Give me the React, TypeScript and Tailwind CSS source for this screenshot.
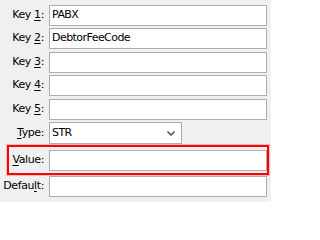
import React from 'react';

const font = { fontFamily: '"DejaVu Sans", Tahoma, sans-serif' };

interface FieldRowProps {
  label: React.ReactNode;
  value?: string;
  className?: string;
}

const TextBox: React.FC<{ value?: string }> = ({ value }) => (
  <div className="ml-[5px] flex h-[21px] w-[218px] items-center border border-[#adadad] bg-white pl-[2px] text-[11px] tracking-[-0.55px] text-black">
    {value}
  </div>
);

const Label: React.FC<{ children: React.ReactNode; className?: string }> = ({ children, className }) => (
  <div className={`text-right text-[11px] tracking-[-0.4px] text-black ${className ?? 'w-[44px]'}`}>{children}</div>
);

const FieldRow: React.FC<FieldRowProps> = ({ label, value, className }) => (
  <div className={`flex items-center ${className ?? ''}`}>
    <Label>{label}</Label>
    <TextBox value={value} />
  </div>
);

const U: React.FC<{ children: React.ReactNode }> = ({ children }) => (
  <span className="underline underline-offset-[2px]">{children}</span>
);

export default function App() {
  return (
    <div className="h-[202px] w-[271px] overflow-hidden bg-[#f0f0f0] pt-[5px]" style={font}>
      <FieldRow label={<>Key <U>1</U>:</>} value="PABX" />
      <FieldRow className="mt-[2px]" label={<>Key <U>2</U>:</>} value="DebtorFeeCode" />
      <FieldRow className="mt-[3px]" label={<>Key <U>3</U>:</>} />
      <FieldRow className="mt-[2px]" label={<>Key <U>4</U>:</>} />
      <FieldRow className="mt-[3px]" label={<>Key <U>5</U>:</>} />

      {/* Type dropdown */}
      <div className="mt-[2px] flex items-center">
        <Label><U>T</U>ype:</Label>
        <div className="ml-[5px] flex h-[22px] w-[133px] items-center justify-between border border-[#adadad] bg-white pl-[2px] pr-[6px] text-[11px] tracking-[-0.55px] text-black">
          <span>STR</span>
          <svg width="8" height="5" viewBox="0 0 8 5" className="mt-[1px]">
            <path d="M0.5 0.5 L4 4 L7.5 0.5" fill="none" stroke="#5a5a5a" strokeWidth="1.6" />
          </svg>
        </div>
      </div>

      {/* Highlighted Value row */}
      <div className="ml-[7px] mt-[1px] flex h-[30px] w-[262px] items-center border-2 border-[#ff0000] shadow-[0_0_0_1px_rgba(255,90,90,0.35)]">
        <Label className="w-[35px]"><U>V</U>alue:</Label>
        <TextBox />
      </div>

      <FieldRow className="mt-[1px]" label={<>Defau<U>l</U>t:</>} />
    </div>
  );
}
